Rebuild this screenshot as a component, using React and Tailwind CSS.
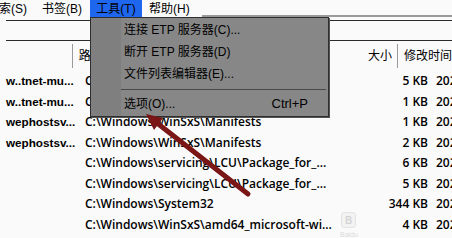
import React from 'react';

const rows = [
    { name: 'w..tnet-mu...', path: 'C:\\Windows\\WinSxS\\Manifests', size: '5 KB' },
    { name: 'w..tnet-mu...', path: 'C:\\Windows\\WinSxS\\Manifests', size: '1 KB' },
    { name: 'wephostsv...', path: 'C:\\Windows\\WinSxS\\Manifests', size: '1 KB' },
    { name: 'wephostsv...', path: 'C:\\Windows\\WinSxS\\Manifests', size: '2 KB' },
    { name: '', path: 'C:\\Windows\\servicing\\LCU\\Package_for_...', size: '6 KB' },
    { name: '', path: 'C:\\Windows\\servicing\\LCU\\Package_for_...', size: '5 KB' },
    { name: '', path: 'C:\\Windows\\System32', size: '344 KB' },
    { name: '', path: 'C:\\Windows\\WinSxS\\amd64_microsoft-wi...', size: '4 KB' },
];

const uiFont = { fontFamily: "'Liberation Sans', 'Noto Sans CJK SC', sans-serif" };
const listFont = { fontFamily: "'Open Sans', 'Noto Sans CJK SC', sans-serif" };
const nameFont = { fontFamily: "'Liberation Sans', sans-serif" };

const MenuItem = ({ label, shortcut }) => (
    <div className="h-[22px] flex items-center pl-[3px] pr-[20px] text-[12px] text-black">
        <span className="flex-1">{label}</span>
        {shortcut && <span className="text-[13px]">{shortcut}</span>}
    </div>
);

export default function App() {
    return (
        <div className="relative w-[452px] h-[238px] overflow-hidden bg-[#fafafa] text-black" style={uiFont}>
            {/* menu bar */}
            <div className="h-[17px] flex items-stretch text-[12px] leading-none whitespace-nowrap">
                <div className="flex items-center w-[42px] overflow-hidden">
                    <span className="ml-[-13px]">搜索(S)</span>
                </div>
                <div className="flex items-center w-[48px]">书签(B)</div>
                <div className="flex items-center justify-center w-[52px] bg-[#1f66ee]">工具(T)</div>
                <div className="flex items-center ml-[7px]">帮助(H)</div>
                <div className="flex-1 flex items-end ml-[12px]">
                    <div className="w-full h-[2px] bg-[#9a9a9a]" />
                </div>
            </div>

            {/* path box */}
            <div className="mt-[3px] ml-[6px] h-[21px] border-t border-b border-[#2a2a2a]" />

            {/* header */}
            <div className="h-[30px] flex text-[12px] whitespace-nowrap">
                <div className="w-[78px]" />
                <div className="w-px my-[3px] bg-[#9a9a9a]" />
                <div className="w-[255px] flex items-center pl-[6px]">路径</div>
                <div className="w-px my-[3px] bg-[#9a9a9a]" />
                <div className="w-[95px] flex items-center justify-end pr-[5px]">大小</div>
                <div className="w-px my-[3px] bg-[#9a9a9a]" />
                <div className="flex-1 flex items-center pl-[6px]">修改时间</div>
            </div>

            {/* rows */}
            <div style={listFont} className="text-[12px] font-semibold">
                {rows.map((r, i) => (
                    <div key={i} className="h-[20.5px] flex items-center whitespace-nowrap">
                        <div style={nameFont} className="w-[79px] pl-[6px] text-[11.7px] font-bold overflow-hidden">{r.name}</div>
                        <div className="w-[256px] pl-[6px] overflow-hidden">{r.path}</div>
                        <div className="w-[94px] text-right pr-[1px]">{r.size}</div>
                        <div className="flex-1 pl-[7px] overflow-hidden">2021-05-08 10:21</div>
                    </div>
                ))}
            </div>

            {/* tools dropdown */}
            <div className="absolute left-[90px] top-[17px] w-[239px] h-[100px] flex bg-[#878787] border border-[#2e2e2e] shadow-[1px_1px_0_#555]">
                <div className="w-[30px] bg-[#7f7f7f]" />
                <div className="flex-1 pt-[1px]">
                    <MenuItem label="连接 ETP 服务器(C)..." />
                    <MenuItem label="断开 ETP 服务器(D)" />
                    <MenuItem label="文件列表编辑器(E)..." />
                    <div className="h-[8px] flex items-center pr-[2px]">
                        <div className="w-full h-px bg-[#4a4a4a]" />
                    </div>
                    <MenuItem label="选项(O)..." shortcut="Ctrl+P" />
                </div>
            </div>

            {/* red arrow annotation */}
            <svg className="absolute left-0 top-0 pointer-events-none" width="452" height="238">
                <line x1="248" y1="194" x2="157" y2="123" stroke="#7a1616" strokeWidth="5" strokeLinecap="round" />
                <polygon points="146,114 163,118 154,130" fill="#7a1616" />
            </svg>

            {/* faint watermark */}
            <div className="absolute left-[341px] top-[212px] w-[15px] h-[16px] rounded-[3px] border border-[#e2e2e2] bg-[#f3f3f3] flex items-center justify-center text-[10px] text-[#d4d4d4] font-bold">B</div>
            <div className="absolute left-[340px] top-[230px] text-[7px] text-[#dadada]">Baidu</div>
        </div>
    );
}
